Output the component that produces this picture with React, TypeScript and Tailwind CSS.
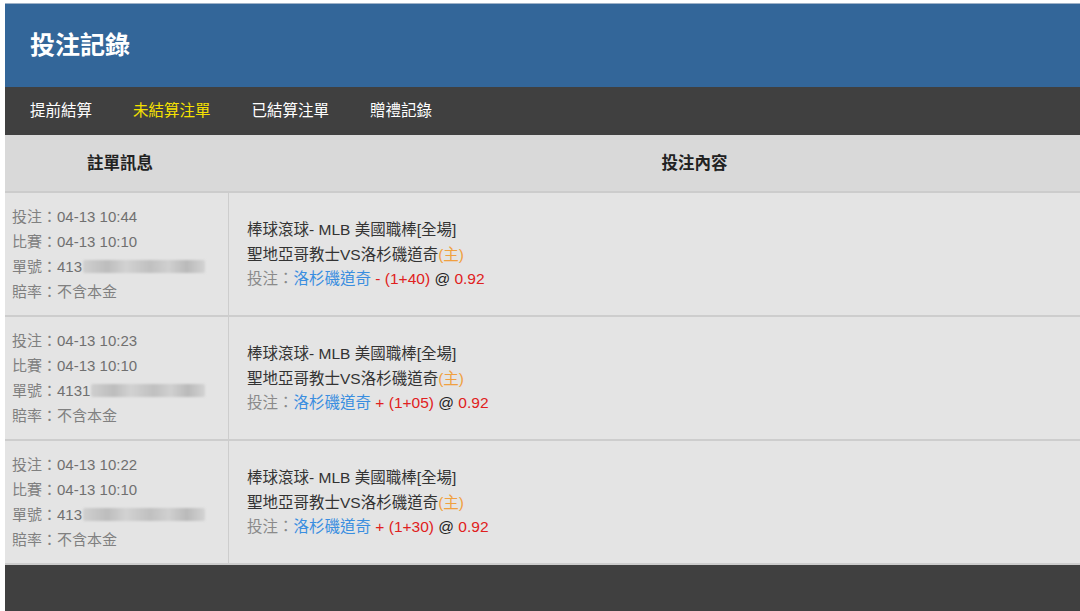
import React from "react";

const font = { fontFamily: '"Liberation Sans", "Noto Sans CJK TC", sans-serif' };

type Row = { bet: string; game: string; no: string; sign: string; hc: string; blur: number };

const rows: Row[] = [
  { bet: "04-13 10:44", game: "04-13 10:10", no: "413", sign: "-", hc: "(1+40)", blur: 122 },
  { bet: "04-13 10:23", game: "04-13 10:10", no: "4131", sign: "+", hc: "(1+05)", blur: 114 },
  { bet: "04-13 10:22", game: "04-13 10:10", no: "413", sign: "+", hc: "(1+30)", blur: 122 },
];

function Blur({ w }: { w: number }) {
  return (
    <span
      className="inline-block h-[13px] align-middle ml-[1px] rounded-[2px] bg-[linear-gradient(90deg,#cfcfcf_0%,#bdbdbd_20%,#d2d2d2_35%,#c0c0c0_55%,#d0d0d0_70%,#bababa_85%,#d3d3d3_100%)] blur-[1px]"
      style={{ width: w }}
    />
  );
}

export default function App() {
  return (
    <div className="w-[1080px] h-[611px] overflow-hidden bg-white pt-[3px] pl-[5px]" style={font}>
      <div className="flex flex-col h-full">
        <div className="h-[84px] bg-[#336699] flex items-center pl-[25px] border-t border-[#9fb2c8]">
          <h1 className="text-white text-[25px] font-bold">投注記錄</h1>
        </div>
        <div className="h-[48px] bg-[#404040] flex items-center pl-[25px] gap-[41px] text-[15.5px] text-white">
          <span>提前結算</span>
          <span className="text-[#f5e000]">未結算注單</span>
          <span>已結算注單</span>
          <span>贈禮記錄</span>
        </div>
        <div className="h-[58px] bg-[#d9d9d9] flex items-center text-[16.5px] text-[#222] font-semibold border-b-2 border-[#cccccc]">
          <div className="w-[230px] text-center">註單訊息</div>
          <div className="flex-1 text-center pl-[74px]">投注內容</div>
        </div>
        {rows.map((r, i) => (
          <div key={i} className="h-[124px] flex bg-[#e4e4e4] border-b-2 border-[#cdcdcd]">
            <div className="w-[224px] border-r border-[#cdcdcd] flex flex-col justify-center pl-[7px] text-[15px] leading-[25px] text-[#808080]">
              <div>投注：<span className="text-[#707070]">{r.bet}</span></div>
              <div>比賽：<span className="text-[#707070]">{r.game}</span></div>
              <div className="flex items-center">單號：<span className="text-[#707070]">{r.no}</span><Blur w={r.blur} /></div>
              <div>賠率：不含本金</div>
            </div>
            <div className="flex-1 flex flex-col justify-center pl-[18px] pt-[2px] text-[15.5px] leading-[24.5px] text-[#333]">
              <div>棒球滾球- MLB 美國職棒[全場]</div>
              <div>聖地亞哥教士VS洛杉磯道奇<span className="text-[#f0a040]">(主)</span></div>
              <div>
                <span className="text-[#8a8a8a]">投注：</span>
                <span className="text-[#3a8ee0]">洛杉磯道奇</span>
                <span className="text-[#e02020]"> {r.sign} {r.hc} </span>
                <span className="text-[#222]">@ </span>
                <span className="text-[#e02020]">0.92</span>
              </div>
            </div>
          </div>
        ))}
        <div className="flex-1 bg-[#404040]" />
      </div>
    </div>
  );
}
